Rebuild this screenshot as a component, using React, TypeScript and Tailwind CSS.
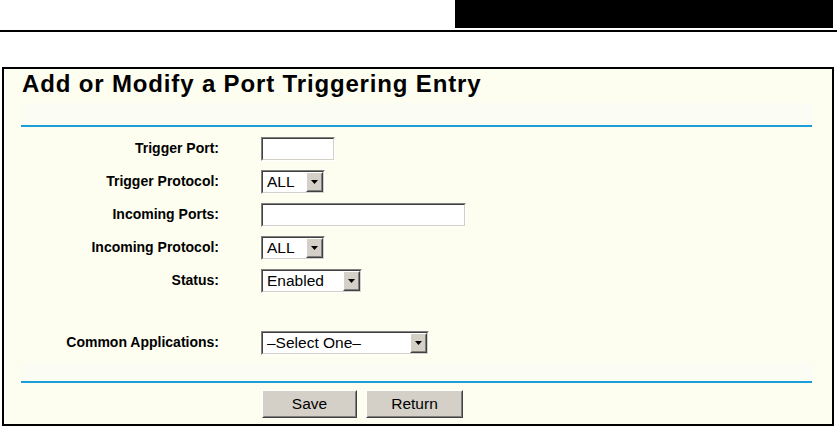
import React from 'react';

// classic sunken box used by text inputs and selects
const Sunken = ({ width, children }: { width: number; children?: React.ReactNode }) => (
  <div
    className="h-[24px] border border-t-[#808080] border-l-[#808080] border-r-white border-b-white"
    style={{ width }}
  >
    <div className="h-full w-full flex items-stretch bg-white border border-t-[#404040] border-l-[#404040] border-r-[#d4d0c8] border-b-[#d4d0c8]">
      {children}
    </div>
  </div>
);

const Raised = ({ className, children }: { className?: string; children?: React.ReactNode }) => (
  <div className={`border border-t-white border-l-white border-r-[#404040] border-b-[#404040] bg-[#d4d0c8] ${className ?? ''}`}>
    <div className="h-full w-full flex items-center justify-center border border-t-[#d4d0c8] border-l-[#d4d0c8] border-r-[#808080] border-b-[#808080]">
      {children}
    </div>
  </div>
);

const Select = ({ width, value }: { width: number; value: string }) => (
  <Sunken width={width}>
    <div className="flex-1 flex items-center pl-[4px] text-[15.5px] leading-none text-black whitespace-nowrap">{value}</div>
    <Raised className="w-[17px] h-full">
      <svg width="7" height="4" viewBox="0 0 7 4">
        <polygon points="0,0 7,0 3.5,4" fill="#000" />
      </svg>
    </Raised>
  </Sunken>
);

const Row = ({ label, children }: { label: string; children: React.ReactNode }) => (
  <div className="flex items-center h-[33px]">
    <div className="w-[215px] text-right text-[14px] font-bold text-black">{label}</div>
    <div className="ml-[42px]">{children}</div>
  </div>
);

export default function App() {
  return (
    <div className="w-[837px] h-[426px] overflow-hidden bg-white font-['Liberation_Sans',Arial,sans-serif]">
      {/* header */}
      <div className="flex h-[28px]">
        <div className="ml-[455px] w-[378px] bg-black" />
      </div>
      <div className="mt-[2px] h-[2px] w-[837px] bg-black" />

      {/* panel */}
      <div className="ml-[2px] mt-[35px] w-[832px] h-[359px] border-2 border-black bg-[#fefef0] flex flex-col">
        <h1 className="mt-[1px] ml-[18px] h-[28px] leading-[28px] text-[24px] font-bold tracking-[0.85px] text-black">
          Add or Modify a Port Triggering Entry
        </h1>
        <div className="ml-[17px] mt-[5px] w-[791px] h-[22px] bg-[#fbfdf5]" />
        <div className="ml-[17px] w-[791px] h-[2px] bg-[#1a9fd6]" />

        <div className="mt-[5px] flex flex-col">
          <Row label="Trigger Port:">
            <Sunken width={74} />
          </Row>
          <Row label="Trigger Protocol:">
            <Select width={64} value="ALL" />
          </Row>
          <Row label="Incoming Ports:">
            <Sunken width={205} />
          </Row>
          <Row label="Incoming Protocol:">
            <Select width={64} value="ALL" />
          </Row>
          <Row label="Status:">
            <Select width={101} value="Enabled" />
          </Row>
        </div>

        <div className="mt-[29px]">
          <Row label="Common Applications:">
            <Select width={168} value="–Select One–" />
          </Row>
        </div>

        <div className="ml-[17px] mt-[4px] w-[791px] h-[18px] bg-[#fbfdf5]" />
        <div className="ml-[17px] w-[791px] h-[2px] bg-[#1a9fd6]" />

        <div className="mt-[7px] ml-[258px] flex gap-[9px]">
          <Raised className="w-[95px] h-[28px]">
            <span className="text-[15.5px] text-black">Save</span>
          </Raised>
          <Raised className="w-[97px] h-[28px]">
            <span className="text-[15.5px] text-black">Return</span>
          </Raised>
        </div>
      </div>
    </div>
  );
}
